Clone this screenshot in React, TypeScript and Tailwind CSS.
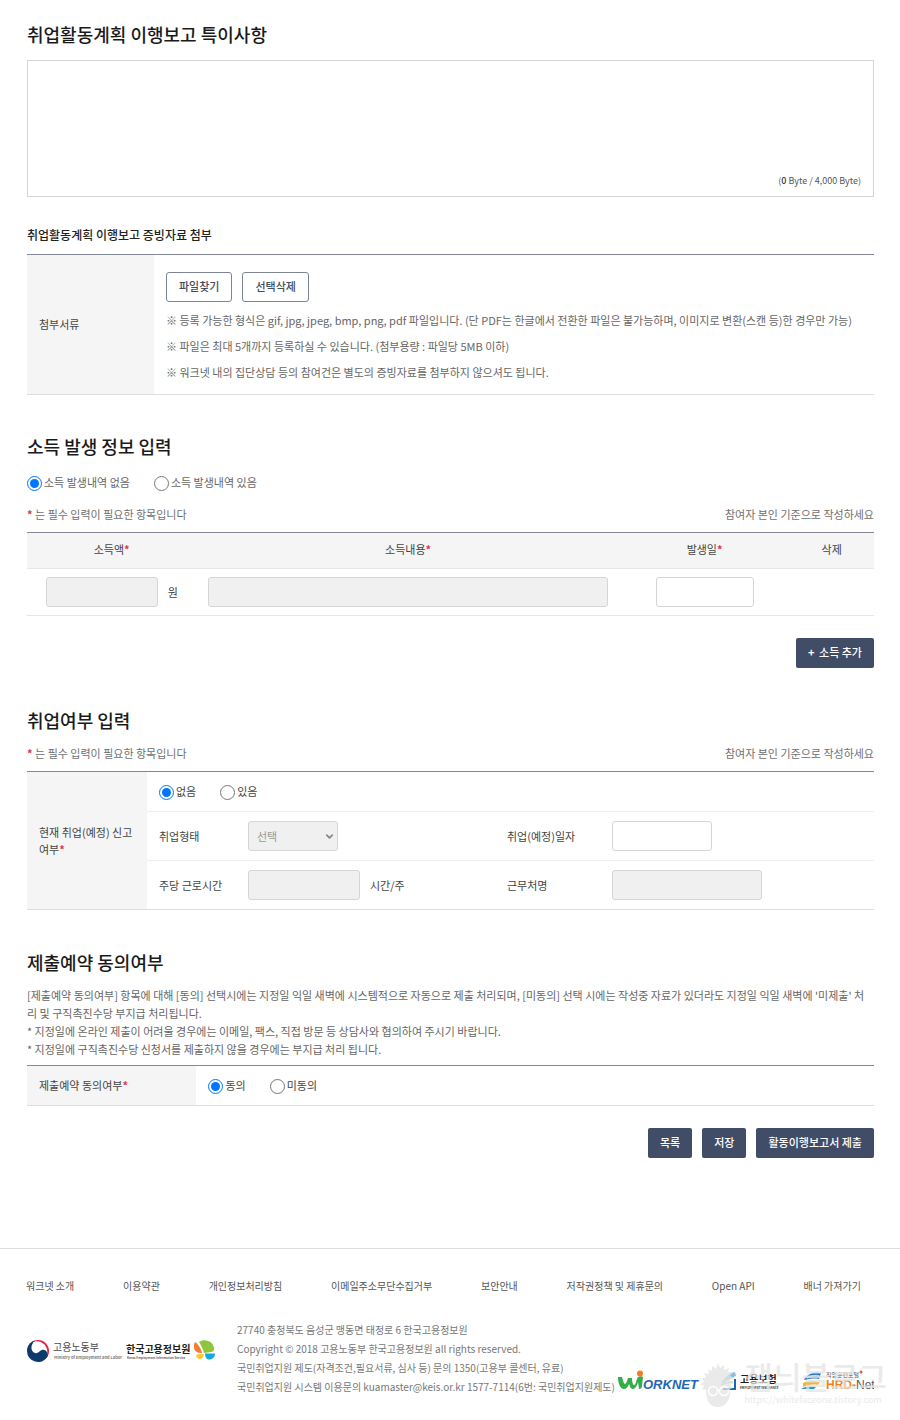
import { useState } from "react";
import type { ReactNode } from "react";
import { ChevronDown } from "lucide-react";

const boxBase = "block h-[30px] rounded-[3px] border border-[#d5d5d5] px-2 text-[11px]";
const disabledBox = `${boxBase} bg-[#f0f0f0]`;
const openBox = `${boxBase} bg-white`;
const darkButton =
  "h-[30px] whitespace-nowrap rounded-[2px] bg-[#414d66] px-[12px] pb-[2px] text-[11px] font-medium text-white";
const lightButton =
  "h-[30px] whitespace-nowrap rounded-[3px] border border-[#7d8496] bg-white px-[12px] pb-[2px] text-[11px] font-medium text-[#444b5c]";

function Star() {
  return <span className="font-bold text-[#e0364c]">*</span>;
}

function Title({ children }: { children: ReactNode }) {
  return <h2 className="text-[18px] leading-[24px] font-medium text-[#1a1a1a]">{children}</h2>;
}

function RequiredNote() {
  return (
    <div className="mb-[9px] flex justify-between leading-[18px] text-[#707070]">
      <p>
        <Star /> 는 필수 입력이 필요한 항목입니다
      </p>
      <p>참여자 본인 기준으로 작성하세요</p>
    </div>
  );
}

function RadioPair({ name, options }: { name: string; options: string[] }) {
  const [value, setValue] = useState(options[0]);
  return (
    <div className="flex gap-[24px]">
      {options.map((option) => (
        <label key={option} className="flex h-[18px] items-center gap-[2px]">
          <input
            type="radio"
            name={name}
            checked={value === option}
            onChange={() => setValue(option)}
            className="mt-[2px] h-[15px] w-[15px] accent-[#0075ff]"
          />
          {option}
        </label>
      ))}
    </div>
  );
}

function LaborLogo() {
  return (
    <svg width="98" height="26" viewBox="0 0 98 26" role="img" aria-label="고용노동부">
      <circle cx="12" cy="13" r="11" fill="#e2233f" />
      <circle cx="10.500" cy="14" r="10.800" fill="#fff" />
      <path d="M9 2.500C3.500 4 1 8.500 1 13a11 11 0 0 0 20.500 5.500C22.500 14 19 11 16 12c-3 1-4 4-7 3-4.500-1.500-5-8 0-12.500Z" fill="#0b3a6b" />
      <text x="27" y="13" fontSize="10" fill="#4a4a4a">고용노동부</text>
      <text x="28" y="21" fontSize="4" fontWeight="700" fill="#777">Ministry of Employment and Labor</text>
    </svg>
  );
}

function KeisLogo() {
  return (
    <svg width="90" height="26" viewBox="0 0 90 26" role="img" aria-label="한국고용정보원">
      <text x="0" y="15" fontSize="10" fontWeight="700" fill="#222">한국고용정보원</text>
      <text x="1" y="21" fontSize="3" fontWeight="700" fill="#666">Korea Employment Information Service</text>
      <path d="M73 4c3-2 6-2 9-1 4 1 6 5 6 8 0 2-1 3-3 3l-7 1c-1-4-3-8-5-11Z" fill="#8cc63f" />
      <path d="M69 4c3 2 6 6 7 11-5 0-8-2-8-6 0-2 0-3 1-5Z" fill="#f47b32" />
      <path d="M70 17c2-1 5-1 8-1-1 3-2 5-4 5s-4-2-4-4Z" fill="#ffc425" />
      <path d="M79 15.500h10c0 4-3 6-6 6-2 0-4-2-4-6Z" fill="#18a8dc" />
    </svg>
  );
}

function WorknetLogo() {
  return (
    <svg width="82" height="22" viewBox="0 0 82 22" role="img" aria-label="WORKNET">
      <path d="M0 7h4c1 4 2 7 3 7s2-3 3-6h4c0 4 1 7 2 7 2 0 2-5 4-8 2-1 4-1 5 0l-1 9c0 2-1 3-3 3l-1-7c-1 4-3 7-5 7s-3-2-4-5c-1 3-3 5-5 5C2 19 0 13 0 7Z" fill="#35ae49" />
      <circle cx="22" cy="3.500" r="3" fill="#f47b20" />
      <text x="25" y="19" fontFamily="Liberation Sans, sans-serif" fontSize="13" fontWeight="700" fontStyle="italic" fill="#2467b3">ORKNET</text>
    </svg>
  );
}

function InsuranceLogo() {
  return (
    <svg width="60" height="22" viewBox="0 0 60 22" role="img" aria-label="고용보험">
      <path d="M1 14C4 8 9 3 15 2l1 4C11 8 6 11 1 14Z" fill="#8bc0dc" />
      <path d="M3 19h12V9" fill="none" stroke="#1768ad" strokeWidth="2" />
      <path d="M1 15c4-2 8-3 12-3" fill="none" stroke="#8cc63f" />
      <text x="20" y="13" fontSize="10" fontWeight="700" fill="#222">고용보험</text>
      <text x="20" y="19" fontSize="3" fontWeight="700" fill="#333">EMPLOYMENT INSURANCE</text>
    </svg>
  );
}

function HrdLogo() {
  return (
    <svg width="73" height="22" viewBox="0 0 73 22" role="img" aria-label="직업훈련포털 HRD-Net">
      <path d="M3 10C6 4 13 1 20 3l-2 6c-5-1-10 0-15 1Z" fill="#2875bd" />
      <path d="M6 8c4-2 8-3 12-2" fill="none" stroke="#a9d5ee" strokeWidth="1.500" />
      <path d="M2 13c6-3 12-2 17-1l-2 3c-6-1-10 0-15 2Z" fill="#f9b233" />
      <path d="M0 19c4-3 10-3 15-2l-2 2Z" fill="#2699d6" />
      <text x="25" y="7" fontSize="6" fill="#555">직업훈련포털</text>
      <circle cx="60" cy="2" r="1.500" fill="#ef5a24" />
      <text x="25" y="19" fontFamily="Liberation Sans, sans-serif" fontSize="12" fontWeight="700" fill="#f08619">
        HRD-<tspan fill="#555" fontWeight="400">Net</tspan>
      </text>
    </svg>
  );
}

function Watermark() {
  return (
    <div className="pointer-events-none absolute right-[13px] bottom-[12px] flex items-center gap-[6px] text-[#e4e4e4] opacity-75">
      <svg width="38" height="50" viewBox="0 0 38 50" aria-hidden="true">
        <path
          fill="currentColor"
          d="M6 32 2 31l2-3-4-2 4-2-2-4 4 0-2-5 5 1-1-5 4 2 0-5 4 3 2-6 2 5 4-3 0 5 5-2-1 4 5 0-3 4 4 2-4 2 4 3-4 2 3 3-3 1c1 10-4 18-12 18S6 43 6 32Z"
        />
        <circle cx="13" cy="33" r="4.500" fill="none" stroke="#fff" strokeWidth="1.500" />
        <circle cx="24" cy="33" r="4.500" fill="none" stroke="#fff" strokeWidth="1.500" />
        <path d="M17 32h3" stroke="#fff" />
      </svg>
      <div className="whitespace-nowrap">
        <p className="text-[31px] leading-[34px] font-medium">잼늬블로그</p>
        <p className="text-[9px] leading-[14px]">https://whitefaceone.tistory.com</p>
      </div>
    </div>
  );
}

const footerLinks = [
  "워크넷 소개",
  "이용약관",
  "개인정보처리방침",
  "이메일주소무단수집거부",
  "보안안내",
  "저작권정책 및 제휴문의",
  "Open API",
  "배너 가져가기",
];

export default function App() {
  const [note, setNote] = useState("");
  const bytes = new TextEncoder().encode(note).length;

  return (
    <div className="bg-white font-['Noto_Sans_CJK_KR',sans-serif] text-[11px] text-[#555]">
      <main className="pt-[22px] pr-[26px] pl-[27px]">
        <Title>취업활동계획 이행보고 특이사항</Title>
        <div className="mt-[14px] border border-[#d5d5d5] pb-[6px]">
          <textarea
            aria-label="취업활동계획 이행보고 특이사항"
            value={note}
            onChange={(e) => setNote(e.target.value)}
            className="block h-[111px] w-full resize-none p-3 outline-none"
          />
          <p className="pr-[12px] text-right text-[9px] leading-[18px]">
            (<span className="font-medium text-[#333]">{bytes}</span> Byte / 4,000 Byte)
          </p>
        </div>

        <h3 className="mt-[29px] text-[12px] leading-[18px] font-medium text-[#222]">취업활동계획 이행보고 증빙자료 첨부</h3>
        <table className="mt-[10px] w-full border-t border-b border-t-[#858899] border-b-[#ddd]">
          <tbody>
            <tr>
              <th className="w-[127px] bg-[#f5f5f5] pl-[12px] text-left font-normal text-[#444]">첨부서류</th>
              <td className="pt-[17px] pb-[9px] pl-[12px]">
                <div className="mb-[5px] flex gap-[10px]">
                  <button type="button" className={lightButton}>파일찾기</button>
                  <button type="button" className={lightButton}>선택삭제</button>
                </div>
                <ul className="leading-[26px] text-[#666]">
                  <li>※ 등록 가능한 형식은 gif, jpg, jpeg, bmp, png, pdf 파일입니다. (단 PDF는 한글에서 전환한 파일은 불가능하며, 이미지로 변환(스캔 등)한 경우만 가능)</li>
                  <li>※ 파일은 최대 5개까지 등록하실 수 있습니다. (첨부용량 : 파일당 5MB 이하)</li>
                  <li>※ 워크넷 내의 집단상담 등의 참여건은 별도의 증빙자료를 첨부하지 않으셔도 됩니다.</li>
                </ul>
              </td>
            </tr>
          </tbody>
        </table>

        <section className="mt-[39px]">
          <Title>소득 발생 정보 입력</Title>
          <div className="mt-[15px] mb-[14px] text-[#666]">
            <RadioPair name="income" options={["소득 발생내역 없음", "소득 발생내역 있음"]} />
          </div>
          <RequiredNote />
          <table className="w-full table-fixed border-t border-t-[#858899] text-center text-[#444]">
            <thead>
              <tr className="h-[36px] border-b border-[#e8e8e8] bg-[#f5f5f5]">
                <th className="w-[20%] pb-[3px] font-normal">소득액<Star /></th>
                <th className="w-[50%] pb-[3px] font-normal">소득내용<Star /></th>
                <th className="w-[20%] pb-[3px] font-normal">발생일<Star /></th>
                <th className="w-[10%] pb-[3px] font-normal">삭제</th>
              </tr>
            </thead>
            <tbody>
              <tr className="h-[47px] border-b border-[#e5e5e5]">
                <td>
                  <div className="flex items-center justify-center gap-[10px]">
                    <input aria-label="소득액" disabled className={`${disabledBox} w-[112px]`} />
                    원
                  </div>
                </td>
                <td className="px-[12px]">
                  <input aria-label="소득내용" disabled className={`${disabledBox} w-full`} />
                </td>
                <td>
                  <input aria-label="발생일" className={`${openBox} mx-auto w-[98px]`} />
                </td>
                <td />
              </tr>
            </tbody>
          </table>
          <div className="mt-[22px] flex justify-end">
            <button type="button" className={darkButton}>
              <span className="mr-[2px] font-bold">+</span> 소득 추가
            </button>
          </div>
        </section>

        <section className="mt-[40px]">
          <Title>취업여부 입력</Title>
          <div className="mt-[12px]">
            <RequiredNote />
          </div>
          <table className="w-full table-fixed border-t border-b border-t-[#858899] border-b-[#ddd] text-[#444]">
            <colgroup>
              <col className="w-[120px]" />
              <col className="w-[89px]" />
              <col />
              <col className="w-[105px]" />
              <col className="w-[274px]" />
            </colgroup>
            <tbody>
              <tr className="h-[40px]">
                <th rowSpan={3} className="bg-[#f5f5f5] pl-[12px] text-left leading-[17px] font-normal">
                  현재 취업(예정) 신고<br />여부<Star />
                </th>
                <td colSpan={4} className="border-b border-[#eee] pl-[12px]">
                  <RadioPair name="employment" options={["없음", "있음"]} />
                </td>
              </tr>
              <tr className="h-[49px] border-b border-[#eee]">
                <td className="pl-[12px]"><label htmlFor="job-type">취업형태</label></td>
                <td className="pl-[12px]">
                  <div className="relative w-[90px]">
                    <select id="job-type" disabled className={`${disabledBox} w-full appearance-none text-[#999]`}>
                      <option>선택</option>
                    </select>
                    <ChevronDown className="pointer-events-none absolute top-[10px] right-[3px] text-[#888]" size={11} strokeWidth={4} />
                  </div>
                </td>
                <td className="pl-[12px]"><label htmlFor="job-date">취업(예정)일자</label></td>
                <td className="pl-[12px]"><input id="job-date" className={`${openBox} w-[100px]`} /></td>
              </tr>
              <tr className="h-[49px]">
                <td className="pl-[12px]"><label htmlFor="job-hours">주당 근로시간</label></td>
                <td className="pl-[12px]">
                  <div className="flex items-center gap-[10px]">
                    <input id="job-hours" disabled className={`${disabledBox} w-[112px]`} />
                    시간/주
                  </div>
                </td>
                <td className="pl-[12px]"><label htmlFor="job-place">근무처명</label></td>
                <td className="pl-[12px]"><input id="job-place" disabled className={`${disabledBox} w-[150px]`} /></td>
              </tr>
            </tbody>
          </table>
        </section>

        <section className="mt-[40px]">
          <Title>제출예약 동의여부</Title>
          <div className="mt-[12px] mb-[7px] leading-[18px] text-[#666]">
            <p>[제출예약 동의여부] 항목에 대해 [동의] 선택시에는 지정일 익일 새벽에 시스템적으로 자동으로 제출 처리되며, [미동의] 선택 시에는 작성중 자료가 있더라도 지정일 익일 새벽에 '미제출' 처<br />리 및 구직촉진수당 부지급 처리됩니다.</p>
            <p>* 지정일에 온라인 제출이 어려울 경우에는 이메일, 팩스, 직접 방문 등 상담사와 협의하여 주시기 바랍니다.</p>
            <p>* 지정일에 구직촉진수당 신청서를 제출하지 않을 경우에는 부지급 처리 됩니다.</p>
          </div>
          <table className="w-full border-t border-b border-t-[#858899] border-b-[#ddd] text-[#444]">
            <tbody>
              <tr className="h-[40px]">
                <th className="w-[20%] bg-[#f5f5f5] pl-[12px] text-left font-normal">제출예약 동의여부<Star /></th>
                <td className="pl-[12px]">
                  <RadioPair name="consent" options={["동의", "미동의"]} />
                </td>
              </tr>
            </tbody>
          </table>
          <div className="mt-[22px] flex justify-end gap-[10px]">
            <button type="button" className={darkButton}>목록</button>
            <button type="button" className={darkButton}>저장</button>
            <button type="button" className={darkButton}>활동이행보고서 제출</button>
          </div>
        </section>
      </main>

      <footer className="relative mt-[90px] border-t border-[#ddd] px-[26px] pt-[28px] pb-[24px] text-[10px]">
        <nav className="flex justify-between pr-[13px] leading-[18px] whitespace-nowrap">
          {footerLinks.map((link) => (
            <a key={link} href="#">{link}</a>
          ))}
        </nav>
        <div className="mt-[25px] flex items-end">
          <div className="mb-[32px] flex w-[211px] shrink-0 gap-[2px]">
            <LaborLogo />
            <KeisLogo />
          </div>
          <address className="shrink-0 leading-[19px] whitespace-nowrap text-[#777] not-italic">
            <p>27740 충청북도 음성군 맹동면 태정로 6 한국고용정보원</p>
            <p>Copyright © 2018 고용노동부 한국고용정보원 all rights reserved.</p>
            <p>국민취업지원 제도(자격조건,필요서류, 심사 등) 문의 1350(고용부 콜센터, 유료)</p>
            <p>국민취업지원 시스템 이용문의 kuamaster@keis.or.kr 1577-7114(6번: 국민취업지원제도)</p>
          </address>
          <div className="mb-[4px] flex flex-1 items-end justify-between pl-[3px]">
            <WorknetLogo />
            <InsuranceLogo />
            <HrdLogo />
          </div>
        </div>
        <Watermark />
      </footer>
    </div>
  );
}
